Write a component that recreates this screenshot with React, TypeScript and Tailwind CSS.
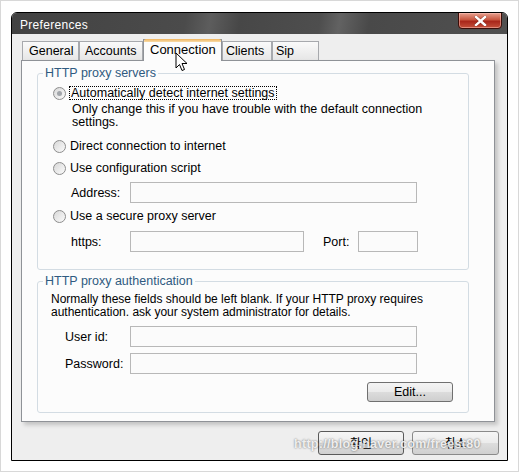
import React from 'react';

const font = { fontFamily: '"Liberation Sans", Arial, sans-serif' };

const Radio = ({ checked = false }: { checked?: boolean }) => (
  <span className="flex h-[13px] w-[13px] shrink-0 items-center justify-center rounded-full border border-[#8d8d8d] bg-gradient-to-br from-[#d8d8d8] to-[#fbfbfb]">
    {checked && <span className="h-[5px] w-[5px] rounded-full bg-[#a2a6ab]" />}
  </span>
);

const Field = ({ className = '' }: { className?: string }) => (
  <div className={`h-[21px] border border-[#b8b8b8] bg-[#fbfbfb] ${className}`} />
);

const Tab = ({ label, width, pl, active = false }: { label: string; width: string; pl: string; active?: boolean }) =>
  active ? (
    <div className={`relative z-10 -mb-px flex h-[22px] items-start border border-b-0 border-[#8f9297] bg-[#fcfcfc] pt-[2px] ${width} ${pl}`}>
      <div className="absolute inset-x-0 -top-px h-[3px] rounded-t-[2px] bg-gradient-to-b from-[#f0b35a] to-[#f7dca8]" />
      <span className="text-[13px] leading-[16px] text-black">{label}</span>
    </div>
  ) : (
    <div className={`flex h-[19px] items-center border border-b-0 border-[#a7a9ad] bg-gradient-to-b from-[#fafafa] to-[#e6e6e6] ${width} ${pl}`}>
      <span className="text-[12.5px] leading-[14px] text-black">{label}</span>
    </div>
  );

export default function App() {
  return (
    <div className="relative h-[472px] w-[519px] overflow-hidden border border-[#d8d8d8] bg-white" style={font}>
      <div className="ml-[10px] mt-[11px] flex h-[449px] w-[497px] flex-col overflow-hidden rounded-t-[6px] border border-black bg-[#eeeeee]">
        {/* Title bar */}
        <div className="flex h-[21px] shrink-0 items-start justify-between bg-[linear-gradient(100deg,#424242_0%,#4b4b4b_35%,#5d5d5d_40%,#474747_46%,#4e4e4e_62%,#626262_66%,#494949_72%,#505050_100%)]">
          <span className="pl-[8px] pt-[5px] text-[12px] leading-[14px] tracking-[0.3px] text-white">Preferences</span>
          <div className="-mt-px mr-[5px] flex h-[17px] w-[44px] items-center justify-center rounded-b-[4px] border border-[#3b0d08] bg-[linear-gradient(180deg,#e7a190_0%,#c8563f_45%,#a9261a_55%,#c4503a_100%)] shadow-[inset_0_0_0_1px_rgba(255,200,190,0.5)]">
            <svg width="13" height="10" viewBox="0 0 13 10">
              <path d="M2 1 L11 9 M11 1 L2 9" stroke="#5a1a12" strokeWidth="3.4" strokeLinecap="square" opacity="0.5" />
              <path d="M2 1 L11 9 M11 1 L2 9" stroke="#ffffff" strokeWidth="2.4" strokeLinecap="square" />
            </svg>
          </div>
        </div>

        {/* Body */}
        <div className="flex flex-1 flex-col bg-[#eeeeee] pl-[9px] pr-[11px] pt-[5px]">
          {/* Tabs */}
          <div className="flex items-end pl-[1px]">
            <Tab label="General" width="w-[57px]" pl="pl-[6px]" />
            <Tab label="Accounts" width="w-[64px]" pl="pl-[5px]" />
            <Tab label="Connection" width="w-[79px]" pl="pl-[6px]" active />
            <Tab label="Clients" width="w-[50px]" pl="pl-[3px]" />
            <Tab label="Sip" width="w-[47px]" pl="pl-[3px]" />
          </div>

          {/* Panel */}
          <div className="h-[362px] w-[474px] border border-[#8f9297] bg-[#fcfcfc] pl-[15px] pt-[5px] shadow-[3px_3px_4px_rgba(0,0,0,0.18)]">
            <fieldset className="w-[432px] rounded-[3px] border border-[#d3dce3] pb-[17px] pl-[15px]">
              <legend className="-ml-[10px] px-[2px] text-[12.5px] leading-[14px] text-[#2f5a80]">HTTP proxy servers</legend>

              <div className="mt-[6px] flex h-[14px] items-center gap-[3px]">
                <Radio checked />
                <span className="border border-dotted border-black px-[1px] text-[12.5px] leading-[12px] text-black">
                  Automatically detect internet settings
                </span>
              </div>
              <p className="ml-[19px] mt-[3px] text-[12.5px] leading-[12.5px] text-black">
                Only change this if you have trouble with the default connection
                <br />
                settings.
              </p>

              <div className="mt-[11px] flex h-[14px] items-center gap-[4px]">
                <Radio />
                <span className="text-[12.5px] leading-[14px] text-black">Direct connection to internet</span>
              </div>

              <div className="mt-[8px] flex h-[14px] items-center gap-[4px]">
                <Radio />
                <span className="text-[12.5px] leading-[14px] text-black">Use configuration script</span>
              </div>

              <div className="ml-[18px] mt-[7px] flex items-center">
                <span className="w-[59px] text-[12.5px] leading-[14px] text-black">Address:</span>
                <Field className="w-[287px]" />
              </div>

              <div className="mt-[6px] flex h-[14px] items-center gap-[4px]">
                <Radio />
                <span className="text-[12.5px] leading-[14px] text-black">Use a secure proxy server</span>
              </div>

              <div className="ml-[18px] mt-[8px] flex items-center">
                <span className="w-[59px] text-[12.5px] leading-[14px] text-black">https:</span>
                <Field className="w-[174px]" />
                <span className="ml-[19px] w-[35px] text-[12.5px] leading-[14px] text-black">Port:</span>
                <Field className="w-[60px]" />
              </div>
            </fieldset>

            <fieldset className="mt-[4px] w-[432px] rounded-[3px] border border-[#d3dce3] pb-[10px] pl-[13px] pr-[15px]">
              <legend className="-ml-[8px] px-[2px] text-[12.5px] leading-[14px] text-[#2f5a80]">HTTP proxy authentication</legend>

              <p className="mt-[5px] text-[12px] leading-[12.5px] text-black">
                Normally these fields should be left blank. If your HTTP proxy requires
                <br />
                authentication. ask your system administrator for details.
              </p>

              <div className="ml-[14px] mt-[8px] flex items-center">
                <span className="w-[65px] text-[12.5px] leading-[14px] text-black">User id:</span>
                <Field className="w-[287px]" />
              </div>
              <div className="ml-[14px] mt-[6px] flex items-center">
                <span className="w-[65px] text-[12.5px] leading-[14px] text-black">Password:</span>
                <Field className="w-[287px]" />
              </div>

              <div className="mt-[8px] flex justify-end">
                <button className="flex h-[20px] w-[86px] items-center justify-center rounded-[3px] border border-[#707070] bg-[linear-gradient(180deg,#f4f4f4_0%,#ebebeb_48%,#dcdcdc_52%,#cfcfcf_100%)] text-[12.5px] leading-[14px] text-black">
                  Edit...
                </button>
              </div>
            </fieldset>
          </div>

          {/* Dialog buttons */}
          <div className="mt-[9px] flex justify-end gap-[8px]">
            <button className="flex h-[24px] w-[86px] items-center justify-center rounded-[3px] border border-[#5a5a5a] bg-[linear-gradient(180deg,#f6f6f6_0%,#ececec_48%,#dddddd_52%,#d0d0d0_100%)] text-[12px] leading-[14px] text-black" style={{ fontFamily: '"Noto Sans CJK KR", sans-serif' }}>
              확인
            </button>
            <button className="mr-[-3px] flex h-[24px] w-[87px] items-center justify-center rounded-[3px] border border-[#8a8a8a] bg-[linear-gradient(180deg,#f6f6f6_0%,#ececec_48%,#dddddd_52%,#d0d0d0_100%)] text-[12px] leading-[14px] text-black" style={{ fontFamily: '"Noto Sans CJK KR", sans-serif' }}>
              취소
            </button>
          </div>
        </div>
      </div>

      {/* Mouse cursor */}
      <svg className="absolute left-[174px] top-[51px] z-20" width="13" height="21" viewBox="0 0 13 21">
        <path d="M1 1 L1 16 L4.5 12.5 L7 18.5 L9.5 17.5 L7 11.5 L12 11.5 Z" fill="#ffffff" stroke="#000000" strokeWidth="1" strokeLinejoin="miter" />
      </svg>

      {/* Watermark */}
      <span className="absolute left-[293px] top-[435px] z-20 text-[12.5px] font-bold leading-[16px] tracking-[0.3px] text-white/85 [text-shadow:0_0_2px_rgba(0,0,0,0.6)]">
        http://blog.naver.com/freest80
      </span>
    </div>
  );
}
